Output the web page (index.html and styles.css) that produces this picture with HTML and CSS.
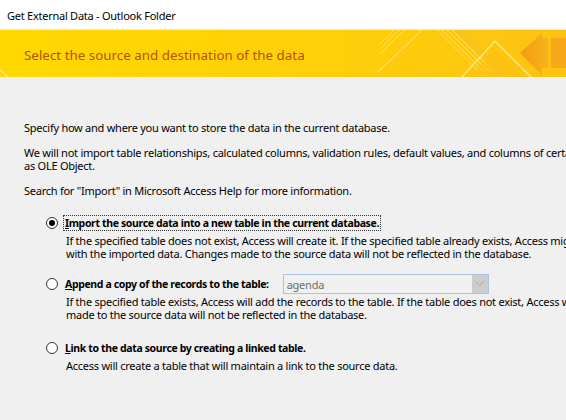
FILE: index.html
```html
<!DOCTYPE html>
<html>
<head>
<meta charset="utf-8">
<link rel="stylesheet" href="styles.css">
</head>
<body>
<div class="window">
  <div class="titlebar">Get External Data - Outlook Folder</div>
  <div class="banner">
    <svg class="banner-art" width="566" height="47" viewBox="0 0 566 47" preserveAspectRatio="none">
      <defs>
        <linearGradient id="bg" x1="0" y1="0" x2="1" y2="0">
          <stop offset="0" stop-color="#FFD800"/>
          <stop offset="0.6" stop-color="#FFCF0A"/>
          <stop offset="1" stop-color="#FCC212"/>
        </linearGradient>
        <linearGradient id="arrow" x1="0" y1="0" x2="1" y2="0">
          <stop offset="0" stop-color="#F39A14"/>
          <stop offset="1" stop-color="#F8B41A"/>
        </linearGradient>
      </defs>
      <rect x="0" y="0" width="566" height="47" fill="url(#bg)"/>
      <path d="M0 40 L8 47" stroke="#FFE98A" stroke-width="1.5"/>
      <g stroke="#FFE36A" stroke-width="1" opacity="0.9">
        <path d="M380 14 L394 0"/><path d="M380 19 L399 0"/><path d="M380 24 L404 0"/>
        <path d="M378 42 L422 0" stroke="#FFE25A" stroke-width="1.2"/>
        <path d="M437 0 L484 47"/><path d="M442 0 L489 47"/><path d="M447 0 L494 47"/><path d="M452 0 L499 47"/>
        <path d="M460 0 L507 47" stroke="#FBC21C" stroke-width="6"/>
      </g>
      <path d="M462 47 L495 11 L531 47" fill="none" stroke="#FFE684" stroke-width="1.5"/>
      <path d="M470 47 L495 20 L520 47" fill="#FCC010" opacity="0.6"/>
      <path d="M520 23 L542 3 L542 8 L548 8 L548 38 L542 38 L542 45 Z" fill="url(#arrow)"/>
      <rect x="551" y="8" width="15" height="30" fill="#F7A91A"/>
    </svg>
    <h1 class="banner-title">Select the source and destination of the data</h1>
  </div>
  <div class="content">
    <p class="intro">Specify how and where you want to store the data in the current database.</p>
    <p class="intro">We will not import table relationships, calculated columns, validation rules, default values, and columns of certain legacy data types such<br>as OLE Object.</p>
    <p class="intro">Search for "Import" in Microsoft Access Help for more information.</p>

    <div class="options">
      <div class="option opt-import">
        <div class="option-head">
          <span class="radio checked"></span>
          <span class="label focus"><u>I</u>mport the source data into a new table in the current database.</span>
        </div>
        <p class="desc">If the specified table does not exist, Access will create it. If the specified table already exists, Access might overwrite its contents<br>with the imported data. Changes made to the source data will not be reflected in the database.</p>
      </div>

      <div class="option opt-append">
        <div class="option-head">
          <span class="radio"></span>
          <span class="label"><u>A</u>ppend a copy of the records to the table:</span>
          <div class="combo">
            <span class="combo-text">agenda</span>
            <span class="combo-btn">
              <svg width="9" height="6" viewBox="0 0 9 6"><path d="M0.5 0.5 L4.5 4.5 L8.5 0.5" fill="none" stroke="#a8a8a8" stroke-width="1"/></svg>
            </span>
          </div>
        </div>
        <p class="desc">If the specified table exists, Access will add the records to the table. If the table does not exist, Access will create it. Changes<br>made to the source data will not be reflected in the database.</p>
      </div>

      <div class="option opt-link">
        <div class="option-head">
          <span class="radio"></span>
          <span class="label"><u>L</u>ink to the data source by creating a linked table.</span>
        </div>
        <p class="desc">Access will create a table that will maintain a link to the source data.</p>
      </div>
    </div>
  </div>
</div>
</body>
</html>
```

FILE: styles.css
```css
html, body {
  margin: 0;
  padding: 0;
}
body {
  width: 566px;
  height: 420px;
  overflow: hidden;
  background: #f0f0f0;
  font-family: "Noto Sans", "Open Sans", sans-serif;
  font-size: 11px;
  letter-spacing: -0.25px;
  color: #000;
}
.window {
  display: flex;
  flex-direction: column;
  width: 566px;
  height: 420px;
  overflow: hidden;
}
.titlebar {
  height: 30px;
  flex: none;
  background: #fff;
  display: flex;
  align-items: center;
  padding-left: 7px;
  padding-top: 1px;
  border-bottom: 1px solid #ececec;
  box-sizing: border-box;
}
.banner {
  position: relative;
  flex: none;
  height: 47px;
  display: flex;
  align-items: center;
  padding-left: 24px;
}
.banner-art {
  position: absolute;
  left: 0;
  top: 0;
}
.banner-title {
  position: relative;
  margin: 0;
  font-weight: normal;
  font-size: 13.4px;
  letter-spacing: 0;
  color: #B4530C;
  padding-top: 2px;
}
.content {
  padding: 44px 0 0 24px;
  white-space: nowrap;
}
.intro {
  margin: 0 0 12px 0;
  line-height: 13px;
}
.options {
  padding-left: 22px;
  padding-top: 6px;
}
.option-head {
  display: flex;
  align-items: center;
  height: 16px;
}
.radio {
  width: 10px;
  height: 10px;
  border: 1px solid #333;
  border-radius: 50%;
  background: #fff;
  display: flex;
  align-items: center;
  justify-content: center;
  margin-right: 5px;
  flex: none;
}
.radio.checked::after {
  content: "";
  width: 6px;
  height: 6px;
  border-radius: 50%;
  background: #000;
}
.label {
  font-weight: bold;
  font-size: 10.5px;
  letter-spacing: -0.36px;
  padding: 0 1px;
  border: 1px dotted transparent;
  line-height: 14px;
}
.label.focus {
  border-color: #333;
}
.desc {
  margin: 3px 0 0 20px;
  line-height: 13px;
}
.opt-append {
  margin-top: 14px;
}
.opt-append .option-head {
  height: 20px;
}
.opt-append .desc {
  margin-top: 1px;
}
.opt-link {
  margin-top: 19px;
}
.combo {
  display: flex;
  align-items: center;
  margin-left: 12px;
  width: 206px;
  height: 20px;
  box-sizing: border-box;
  border: 1px solid #a9c3e3;
  background: #f0f0f0;
}
.combo-text {
  flex: 1;
  padding-left: 3px;
  color: #6d6d6d;
}
.combo-btn {
  width: 16px;
  height: 18px;
  background: #cccccc;
  display: flex;
  align-items: center;
  justify-content: center;
}
```
